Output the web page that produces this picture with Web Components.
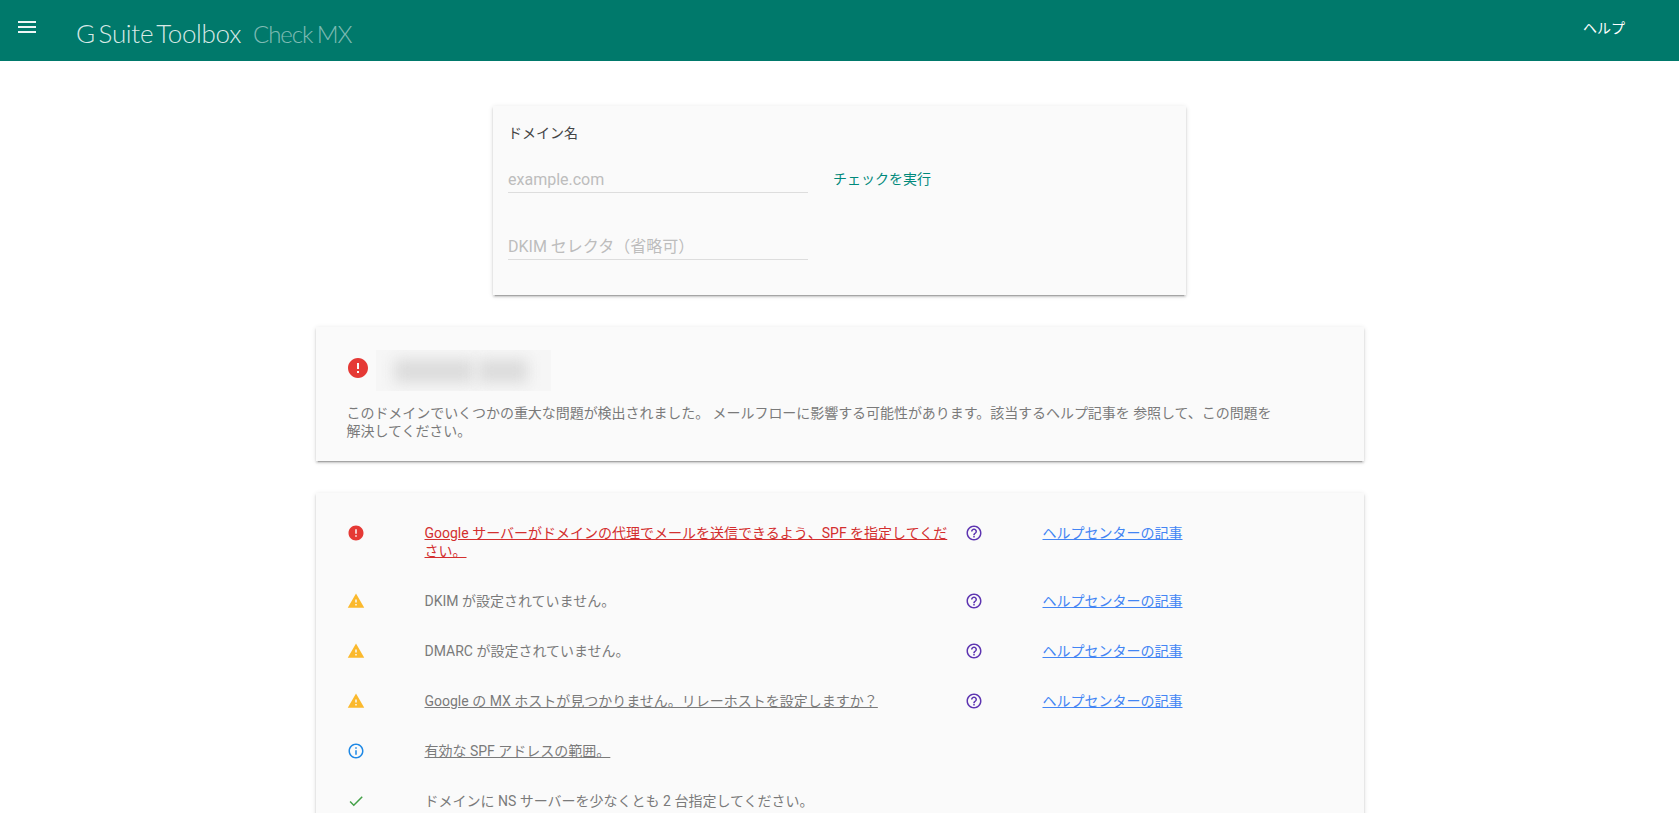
<!DOCTYPE html>
<html lang="ja">
<head>
<meta charset="utf-8">
<title>Check MX</title>
<style>
  html, body {
    margin: 0;
    height: 100%;
    overflow: hidden;
    background: #fff;
    font-family: Roboto, 'Noto Sans CJK JP', sans-serif;
    font-size: 14px;
  }
</style>
</head>
<body>
<gs-header>
  <span slot="title">G Suite Toolbox</span>
  <span slot="sub">Check MX</span>
  <span slot="action">ヘルプ</span>
</gs-header>
<gs-page>
  <gs-card kind="form">
    <gs-form-head>ドメイン名</gs-form-head>
    <gs-field action="チェックを実行">example.com</gs-field>
    <gs-field>DKIM セレクタ（省略可）</gs-field>
  </gs-card>
  <gs-card kind="summary">
    <gs-summary>このドメインでいくつかの重大な問題が検出されました。 メールフローに影響する可能性があります。該当するヘルプ記事を 参照して、この問題を解決してください。</gs-summary>
  </gs-card>
  <gs-card kind="list">
    <gs-check-row icon="error" tone="error" underline help="ヘルプセンターの記事">Google サーバーがドメインの代理でメールを送信できるよう、SPF を指定してください。</gs-check-row>
    <gs-check-row icon="warning" help="ヘルプセンターの記事">DKIM が設定されていません。</gs-check-row>
    <gs-check-row icon="warning" help="ヘルプセンターの記事">DMARC が設定されていません。</gs-check-row>
    <gs-check-row icon="warning" underline help="ヘルプセンターの記事">Google の MX ホストが見つかりません。リレーホストを設定しますか？</gs-check-row>
    <gs-check-row icon="info" underline>有効な SPF アドレスの範囲。</gs-check-row>
    <gs-check-row icon="check">ドメインに NS サーバーを少なくとも 2 台指定してください。</gs-check-row>
  </gs-card>
</gs-page>

<script>
const ICONS = {
  menu: ['#eef6f5', 'M3 18h18v-2H3v2zm0-5h18v-2H3v2zm0-7v2h18V6H3z'],
  error: ['#e53935', 'M12 2C6.48 2 2 6.48 2 12s4.48 10 10 10 10-4.48 10-10S17.52 2 12 2zm1 15h-2v-2h2v2zm0-4h-2V7h2v6z'],
  warning: ['#fbb92d', 'M1 21h22L12 2 1 21zm12-3h-2v-2h2v2zm0-4h-2v-4h2v4z'],
  info: ['#1e88e5', 'M11 7h2v2h-2zm0 4h2v6h-2zm1-9C6.48 2 2 6.48 2 12s4.48 10 10 10 10-4.48 10-10S17.52 2 12 2zm0 18c-4.41 0-8-3.59-8-8s3.59-8 8-8 8 3.59 8 8-3.59 8-8 8z'],
  check: ['#43a047', 'M9 16.17L4.83 12l-1.42 1.41L9 19 21 7l-1.41-1.41z'],
  help: ['#5e35b1', 'M11 18h2v-2h-2v2zm1-16C6.48 2 2 6.48 2 12s4.48 10 10 10 10-4.48 10-10S17.52 2 12 2zm0 18c-4.41 0-8-3.59-8-8s3.59-8 8-8 8 3.59 8 8-3.59 8-8 8zm0-14c-2.21 0-4 1.79-4 4h2c0-1.1.9-2 2-2s2 .9 2 2c0 2-3 1.75-3 5h2c0-2.25 3-2.5 3-5 0-2.21-1.79-4-4-4z']
};

class GsIcon extends HTMLElement {
  constructor() {
    super();
    this.attachShadow({ mode: 'open' });
  }

  connectedCallback() {
    const [color, path] = ICONS[this.getAttribute('name')];
    const size = this.getAttribute('size') || 18;
    this.shadowRoot.innerHTML = `
      <style>
        :host { display: block; width: ${size}px; height: ${size}px; flex: none; }
        svg { display: block; width: 100%; height: 100%; fill: ${color}; }
      </style>
      <svg viewBox="0 0 24 24"><path d="${path}"></path></svg>`;
  }
}

const headerTemplate = document.createElement('template');
headerTemplate.innerHTML = `
  <style>
    :host {
      display: flex;
      align-items: center;
      height: 61px;
      background: #00796b;
      color: #fff;
      padding: 0 54px 0 15px;
    }
    .menu { margin-top: -7px; }
    .logo {
      display: flex;
      align-items: baseline;
      margin-left: 37px;
      margin-top: 5px;
      font-family: Lato, sans-serif;
      font-weight: 300;
    }
    .title { color: rgba(255, 255, 255, 0.85); font-size: 26px; letter-spacing: -0.3px; word-spacing: -3px; }
    .sub { color: rgba(255, 255, 255, 0.5); font-size: 24px; letter-spacing: -1.1px; word-spacing: -1px; margin-left: 12px; }
    .action { margin-left: auto; font-size: 14px; margin-top: -7px; }
  </style>
  <gs-icon class="menu" name="menu" size="24"></gs-icon>
  <div class="logo">
    <span class="title"><slot name="title"></slot></span>
    <span class="sub"><slot name="sub"></slot></span>
  </div>
  <span class="action"><slot name="action"></slot></span>
`;
class GsHeader extends HTMLElement {
  constructor() {
    super();
    this.attachShadow({ mode: 'open' });
  }

  connectedCallback() {
    this.shadowRoot.appendChild(headerTemplate.content.cloneNode(true));
  }
}

const pageTemplate = document.createElement('template');
pageTemplate.innerHTML = `
  <style>
    :host {
      display: flex;
      flex-direction: column;
      align-items: center;
      gap: 32px;
      padding-top: 45px;
    }
  </style>
  <slot></slot>
`;
class GsPage extends HTMLElement {
  constructor() {
    super();
    this.attachShadow({ mode: 'open' });
  }

  connectedCallback() {
    this.shadowRoot.appendChild(pageTemplate.content.cloneNode(true));
  }
}

const cardTemplate = document.createElement('template');
cardTemplate.innerHTML = `
  <style>
    :host {
      display: block;
      box-sizing: border-box;
      background: #fafafa;
      color: #7a7a7a;
      width: 1048px;
      box-shadow: 0 2px 2px 0 rgba(0, 0, 0, 0.14), 0 3px 1px -2px rgba(0, 0, 0, 0.2), 0 1px 5px 0 rgba(0, 0, 0, 0.12);
    }
    :host([kind="form"]) { width: 693px; height: 189px; padding: 18px 15px 0; }
    :host([kind="summary"]) { height: 134px; padding: 23px 31px 0; }
    :host([kind="list"]) { padding: 15px 31px 0; }
  </style>
  <slot></slot>
`;
class GsCard extends HTMLElement {
  constructor() {
    super();
    this.attachShadow({ mode: 'open' });
  }

  connectedCallback() {
    this.shadowRoot.appendChild(cardTemplate.content.cloneNode(true));
  }
}

const formHeadTemplate = document.createElement('template');
formHeadTemplate.innerHTML = `
  <style>
    :host { display: block; color: #444; line-height: 18px; margin-bottom: 18px; }
  </style>
  <slot></slot>
`;
class GsFormHead extends HTMLElement {
  constructor() {
    super();
    this.attachShadow({ mode: 'open' });
  }

  connectedCallback() {
    this.shadowRoot.appendChild(formHeadTemplate.content.cloneNode(true));
  }
}

const fieldTemplate = document.createElement('template');
fieldTemplate.innerHTML = `
  <style>
    :host { display: flex; align-items: center; height: 36px; margin-bottom: 31px; }
    .box {
      box-sizing: border-box;
      width: 300px;
      height: 29px;
      padding-top: 3px;
      border-bottom: 1px solid #ddd;
      color: #bdbdbd;
      font-size: 16px;
      line-height: 25px;
      white-space: nowrap;
    }
    .action { margin-left: 25px; color: #00897b; font-size: 14px; margin-top: -1px; }
  </style>
  <div class="box"><slot></slot></div>
  <span class="action"></span>
`;
class GsField extends HTMLElement {
  constructor() {
    super();
    this.attachShadow({ mode: 'open' });
  }

  connectedCallback() {
    this.shadowRoot.appendChild(fieldTemplate.content.cloneNode(true));
    this.shadowRoot.querySelector('.action').textContent = this.getAttribute('action') || '';
  }
}

const summaryTemplate = document.createElement('template');
summaryTemplate.innerHTML = `
  <style>
    :host { display: block; }
    .head { display: flex; align-items: flex-start; gap: 6px; margin-left: -1px; margin-bottom: 13px; }
    .head gs-icon { margin-top: 6px; }
    .blur {
      overflow: hidden;
      display: flex;
      align-items: center;
      gap: 4px;
      width: 175px;
      height: 41px;
      padding: 0 18px;
      box-sizing: border-box;
      background: #f6f6f6;
    }
    .blur i {
      display: block;
      height: 24px;
      background: #dcdcdc;
      filter: blur(7px);
    }
    .blur i:nth-child(1) { width: 80px; }
    .blur i:nth-child(2) { width: 50px; }
    p { margin: 0; width: 930px; line-height: 18px; letter-spacing: -0.05px; }
  </style>
  <div class="head">
    <gs-icon name="error" size="24"></gs-icon>
    <div class="blur"><i></i><i></i></div>
  </div>
  <p><slot></slot></p>
`;
class GsSummary extends HTMLElement {
  constructor() {
    super();
    this.attachShadow({ mode: 'open' });
  }

  connectedCallback() {
    this.shadowRoot.appendChild(summaryTemplate.content.cloneNode(true));
  }
}

const rowTemplate = document.createElement('template');
rowTemplate.innerHTML = `
  <style>
    :host {
      display: grid;
      grid-template-columns: 78px 540px 78px auto;
      align-items: start;
      padding: 16px 0;
      line-height: 18px;
    }
    .text { padding-right: 12px; }
    :host([underline]) .text { text-decoration: underline; }
    :host([tone="error"]) .text { color: #d32f2f; }
    a { color: #4285f4; text-decoration: underline; }
  </style>
  <gs-icon class="status"></gs-icon>
  <div class="text"><slot></slot></div>
  <span class="help-icon"></span>
  <a class="link"></a>
`;
class GsCheckRow extends HTMLElement {
  constructor() {
    super();
    this.attachShadow({ mode: 'open' });
  }

  connectedCallback() {
    // the icon reads its name when connected, so set it before appending
    const content = rowTemplate.content.cloneNode(true);
    content.querySelector('.status').setAttribute('name', this.getAttribute('icon'));
    const help = this.getAttribute('help');
    if (help) {
      content.querySelector('.link').textContent = help;
      content.querySelector('.help-icon').innerHTML = '<gs-icon name="help" size="18"></gs-icon>';
    }
    this.shadowRoot.appendChild(content);
  }
}

customElements.define('gs-icon', GsIcon);
customElements.define('gs-header', GsHeader);
customElements.define('gs-page', GsPage);
customElements.define('gs-card', GsCard);
customElements.define('gs-form-head', GsFormHead);
customElements.define('gs-field', GsField);
customElements.define('gs-summary', GsSummary);
customElements.define('gs-check-row', GsCheckRow);
</script>
</body>
</html>
